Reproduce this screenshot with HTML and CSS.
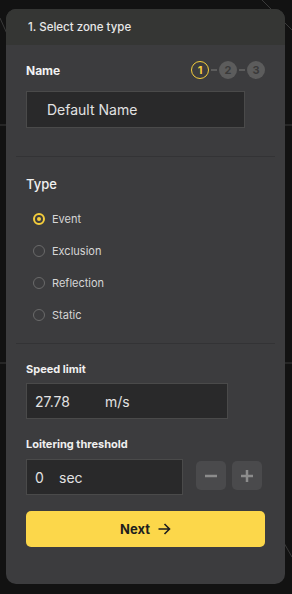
FILE: index.html
```html
<!DOCTYPE html>
<html>
<head>
    <title>Zone setup</title>
    <link rel="stylesheet" href="styles.css">
</head>
<body>
    <svg class="map-lines" width="292" height="594" viewBox="0 0 292 594">
        <line x1="0" y1="18" x2="8" y2="36" />
        <line x1="262" y1="0" x2="292" y2="30" />
        <line x1="0" y1="125" x2="292" y2="125" />
        <line x1="0" y1="363" x2="292" y2="363" />
        <line x1="284" y1="543" x2="292" y2="557" />
    </svg>

    <div class="panel">
        <div class="panel-header">1. Select zone type</div>
        <div class="panel-body">
            <div class="name-row">
                <span class="label">Name</span>
                <div class="stepper">
                    <span class="step active">1</span>
                    <span class="step-dash"></span>
                    <span class="step">2</span>
                    <span class="step-dash"></span>
                    <span class="step">3</span>
                </div>
            </div>
            <div class="text-field name-field">Default Name</div>

            <div class="divider"></div>

            <div class="section-title">Type</div>
            <div class="radio-list">
                <div class="radio-row"><span class="radio checked"></span>Event</div>
                <div class="radio-row"><span class="radio"></span>Exclusion</div>
                <div class="radio-row"><span class="radio"></span>Reflection</div>
                <div class="radio-row"><span class="radio"></span>Static</div>
            </div>

            <div class="divider"></div>

            <div class="small-label">Speed limit</div>
            <div class="text-field speed-field"><span class="value">27.78</span>m/s</div>

            <div class="small-label">Loitering threshold</div>
            <div class="loiter-row">
                <div class="text-field loiter-field"><span class="value short">0</span>sec</div>
                <button class="step-btn">
                    <svg width="14" height="14" viewBox="0 0 14 14"><path d="M1 7h12" /></svg>
                </button>
                <button class="step-btn">
                    <svg width="14" height="14" viewBox="0 0 14 14"><path d="M1 7h12M7 1v12" /></svg>
                </button>
            </div>

            <button class="next-btn">Next
                <svg width="14" height="14" viewBox="0 0 14 14"><path d="M1.5 7h11M7.5 2l5 5-5 5" /></svg>
            </button>
        </div>
    </div>
</body>
</html>
```

FILE: styles.css
```css
body {
    margin: 0;
    width: 292px;
    height: 594px;
    background: #121212;
    font-family: Inter, "Noto Sans", sans-serif;
    position: relative;
    overflow: hidden;
}

.map-lines {
    position: absolute;
    top: 0;
    left: 0;
}

.map-lines line {
    stroke: #3a3a3a;
    stroke-width: 1;
}

.panel {
    position: relative;
    margin: 9px 0 0 6px;
    width: 279px;
    height: 575px;
    background: #3c3c3e;
    border-radius: 10px;
    overflow: hidden;
}

.panel-header {
    height: 36px;
    line-height: 36px;
    padding-left: 22px;
    background: #353634;
    color: #e8e8e8;
    font-size: 11.5px;
    font-weight: 500;
}

.panel-body {
    padding: 16px 20px 0 20px;
    display: flex;
    flex-direction: column;
}

.name-row {
    display: flex;
    justify-content: space-between;
    align-items: center;
    height: 18px;
}

.label {
    color: #f2f2f2;
    font-size: 12px;
    font-weight: 700;
}

.stepper {
    display: flex;
    align-items: center;
}

.step {
    width: 18px;
    height: 18px;
    border-radius: 50%;
    box-sizing: border-box;
    background: #5c5c5c;
    color: #3a3a3a;
    font-size: 11px;
    font-weight: 700;
    display: flex;
    align-items: center;
    justify-content: center;
}

.step.active {
    background: transparent;
    border: 1.5px solid #f4cd3c;
    color: #f4cd3c;
}

.step-dash {
    width: 6px;
    height: 2px;
    margin: 0 2px;
    background: #5c5c5c;
}

.text-field {
    box-sizing: border-box;
    height: 37px;
    background: #29292a;
    border: 1px solid #4a4a4a;
    color: #e2e2e2;
    font-size: 14px;
    display: flex;
    align-items: center;
}

.name-field {
    margin-top: 12px;
    width: 219px;
    padding-left: 20px;
}

.divider {
    height: 1px;
    background: #333335;
    margin: 28px -10px 0 -10px;
}

.section-title {
    margin-top: 18px;
    color: #f0f0f0;
    font-size: 13px;
    font-weight: 500;
    line-height: 18px;
}

.radio-list {
    margin-top: 10px;
    margin-bottom: -16px;
}

.radio-row {
    height: 32px;
    display: flex;
    align-items: center;
    padding-left: 7px;
    color: #d6d6d6;
    font-size: 11px;
}

.radio {
    width: 12px;
    height: 12px;
    box-sizing: border-box;
    border-radius: 50%;
    border: 1.5px solid #6a6a6a;
    margin-right: 7px;
    position: relative;
}

.radio.checked {
    border: 2px solid #f4cd3c;
}

.radio.checked::after {
    content: '';
    position: absolute;
    top: 2px;
    left: 2px;
    width: 4px;
    height: 4px;
    border-radius: 50%;
    background: #f4cd3c;
}

.small-label {
    margin-top: 17px;
    line-height: 16px;
    color: #f0f0f0;
    font-size: 11px;
    font-weight: 700;
}

.speed-field {
    margin-top: 6px;
    width: 202px;
    height: 36px;
    padding-left: 8px;
}

.value {
    width: 70px;
}

.value.short {
    width: 24px;
}

.loiter-row {
    margin-top: 7px;
    display: flex;
    align-items: flex-start;
}

.loiter-field {
    width: 157px;
    height: 36px;
    padding-left: 8px;
}

.step-btn {
    margin: 2px 0 0 6px;
    width: 30px;
    height: 29px;
    border: none;
    border-radius: 5px;
    background: #4a4a4c;
    display: flex;
    align-items: center;
    justify-content: center;
    padding: 0;
}

.step-btn:first-of-type {
    margin-left: 13px;
}

.step-btn svg path {
    stroke: #8c8c8c;
    stroke-width: 2.5;
    fill: none;
}

.next-btn {
    margin-top: 16px;
    width: 239px;
    height: 36px;
    border: none;
    border-radius: 5px;
    background: #fcd74a;
    color: #1e1e1e;
    font-family: Inter, "Noto Sans", sans-serif;
    font-size: 13px;
    font-weight: 700;
    display: flex;
    align-items: center;
    justify-content: center;
    gap: 7px;
}

.next-btn svg path {
    stroke: #1e1e1e;
    stroke-width: 1.6;
    fill: none;
}
```
